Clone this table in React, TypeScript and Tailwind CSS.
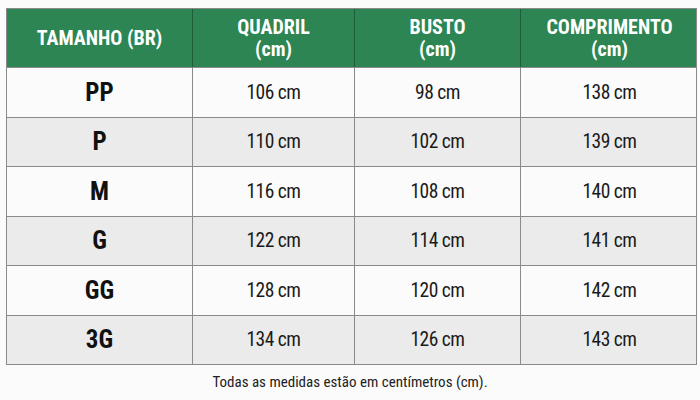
const rows = [
  ["PP", "106 cm", "98 cm", "138 cm"],
  ["P", "110 cm", "102 cm", "139 cm"],
  ["M", "116 cm", "108 cm", "140 cm"],
  ["G", "122 cm", "114 cm", "141 cm"],
  ["GG", "128 cm", "120 cm", "142 cm"],
  ["3G", "134 cm", "126 cm", "143 cm"],
];

const cols = "grid grid-cols-[186px_162px_166px_177px]";
const font = { fontFamily: '"Liberation Sans Narrow", "Roboto Condensed", Roboto, sans-serif' };

export default function App() {
  return (
    <div className="w-[700px] h-[400px] bg-[#fbfbfb] pt-[8px] pl-[6px]" style={font}>
      <div className="w-[691px] border border-[#8a8a8a]">
        <div className={`${cols} bg-[#2c8552] text-white font-bold text-[20px] leading-[22px] h-[58px]`}>
          <div className="flex items-center justify-center border-r border-[#1f5e3a]">TAMANHO (BR)</div>
          <div className="flex items-center justify-center text-center border-r border-[#1f5e3a]">QUADRIL<br />(cm)</div>
          <div className="flex items-center justify-center text-center border-r border-[#1f5e3a]">BUSTO<br />(cm)</div>
          <div className="flex items-center justify-center text-center">COMPRIMENTO<br />(cm)</div>
        </div>
        {rows.map((r, i) => (
          <div
            key={r[0]}
            className={`${cols} h-[49.5px] border-t border-[#8a8a8a] ${i % 2 ? "bg-[#ebebeb]" : "bg-[#fbfbfb]"}`}
          >
            <div className="flex items-center justify-center border-r border-[#8a8a8a] font-bold text-[25px] text-[#111]">{r[0]}</div>
            <div className="flex items-center justify-center border-r border-[#8a8a8a] text-[19.5px] tracking-[-0.5px] text-[#1a1a1a]">{r[1]}</div>
            <div className="flex items-center justify-center border-r border-[#8a8a8a] text-[19.5px] tracking-[-0.5px] text-[#1a1a1a]">{r[2]}</div>
            <div className="flex items-center justify-center text-[19.5px] tracking-[-0.5px] text-[#1a1a1a]">{r[3]}</div>
          </div>
        ))}
      </div>
      <p className="mt-[6px] text-center text-[15px] text-[#222] pr-[6px]">Todas as medidas estão em centímetros (cm).</p>
    </div>
  );
}
